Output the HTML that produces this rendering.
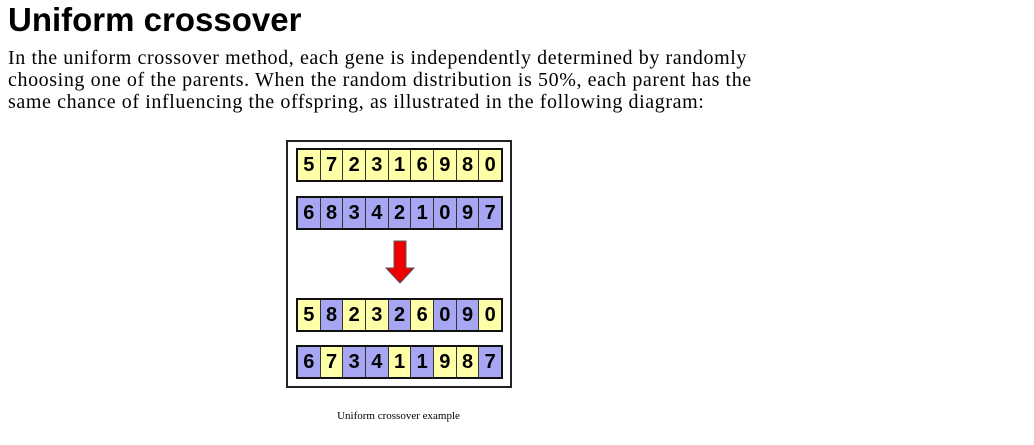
<!DOCTYPE html>
<html><head><style>
body{margin:0;background:#fff;width:1034px;height:445px;position:relative;overflow:hidden}
h1{position:absolute;left:8px;top:1px;margin:0;font:bold 33px "Liberation Sans",sans-serif;color:#000}
p{position:absolute;left:8px;top:47px;margin:0;white-space:nowrap;font:20px/22px "Liberation Serif",serif;letter-spacing:0.6px;color:#000}
.frame{position:absolute;left:286px;top:140px;width:222px;height:244px;border:2px solid #222;box-sizing:content-box}
.row{position:absolute;left:296px;width:203px;height:30px;border:2px solid #111;display:flex}
.row div{flex:1;border-left:1px solid #333;font:bold 20px/30px "Liberation Sans",sans-serif;text-align:center;color:#000}
.row div:first-child{border-left:none}
.y{background:#ffffa8}.b{background:#a6a6f2}
.cap{position:absolute;left:0;width:797px;top:410px;text-align:center;font:11px "Liberation Serif",serif}
</style></head><body>
<h1>Uniform crossover</h1>
<p>In the uniform crossover method, each gene is independently determined by randomly<br>choosing one of the parents. When the random distribution is 50%, each parent has the<br>same chance of influencing the offspring, as illustrated in the following diagram:</p>
<div class="frame"></div>
<div class="row" style="top:148px"><div class="y">5</div><div class="y">7</div><div class="y">2</div><div class="y">3</div><div class="y">1</div><div class="y">6</div><div class="y">9</div><div class="y">8</div><div class="y">0</div></div>
<div class="row" style="top:196px"><div class="b">6</div><div class="b">8</div><div class="b">3</div><div class="b">4</div><div class="b">2</div><div class="b">1</div><div class="b">0</div><div class="b">9</div><div class="b">7</div></div>
<svg style="position:absolute;left:384px;top:240px" width="32" height="45"><polygon points="10,1 22,1 22,28 30,28 16,43 2,28 10,28" fill="#ee0000" stroke="#555" stroke-width="1"/></svg>
<div class="row" style="top:298px"><div class="y">5</div><div class="b">8</div><div class="y">2</div><div class="y">3</div><div class="b">2</div><div class="y">6</div><div class="b">0</div><div class="b">9</div><div class="y">0</div></div>
<div class="row" style="top:345px"><div class="b">6</div><div class="y">7</div><div class="b">3</div><div class="b">4</div><div class="y">1</div><div class="b">1</div><div class="y">9</div><div class="y">8</div><div class="b">7</div></div>
<div class="cap">Uniform crossover example</div>
</body></html>
